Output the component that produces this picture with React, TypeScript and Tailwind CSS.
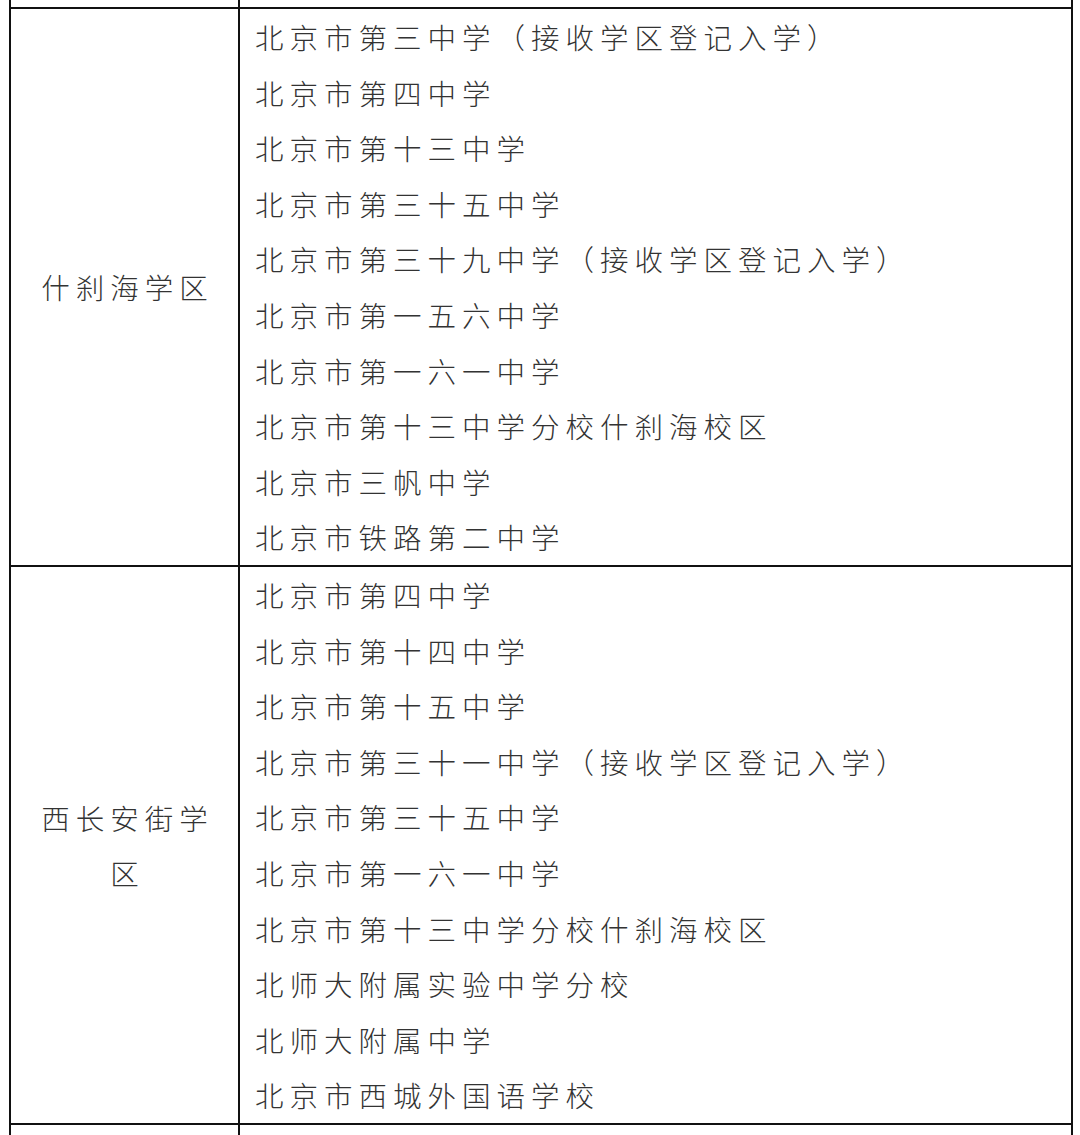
const rows = [
  {
    district: "什刹海学区",
    schools: [
      "北京市第三中学（接收学区登记入学）",
      "北京市第四中学",
      "北京市第十三中学",
      "北京市第三十五中学",
      "北京市第三十九中学（接收学区登记入学）",
      "北京市第一五六中学",
      "北京市第一六一中学",
      "北京市第十三中学分校什刹海校区",
      "北京市三帆中学",
      "北京市铁路第二中学",
    ],
  },
  {
    district: "西长安街学区",
    schools: [
      "北京市第四中学",
      "北京市第十四中学",
      "北京市第十五中学",
      "北京市第三十一中学（接收学区登记入学）",
      "北京市第三十五中学",
      "北京市第一六一中学",
      "北京市第十三中学分校什刹海校区",
      "北师大附属实验中学分校",
      "北师大附属中学",
      "北京市西城外国语学校",
    ],
  },
];

function EdgeRow({ h }: { h: string }) {
  return (
    <div className={`grid grid-cols-[231px_1fr] ${h}`}>
      <div className="border-l-2 border-r-2 border-[#111]" />
      <div className="border-r-2 border-[#111]" />
    </div>
  );
}

export default function App() {
  return (
    <div
      className="w-[1080px] h-[1135px] overflow-hidden bg-white text-[#333] font-light"
      style={{ fontFamily: '"Noto Sans CJK SC", "Noto Sans", sans-serif' }}
    >
      <div className="ml-[9px] w-[1064px]">
        <EdgeRow h="h-[7px]" />
        <div className="border-t-2 border-[#111]">
          {rows.map((row, i) => (
            <div
              key={i}
              className="grid grid-cols-[231px_1fr] border-b-2 border-[#111]"
            >
              <div className="flex items-center justify-center border-l-2 border-r-2 border-[#111] px-[14px] text-center text-[28.5px] leading-[55px] tracking-[6px]">
                <span className="pl-[6px]">{row.district}</span>
              </div>
              <div className="border-r-2 border-[#111] pl-[15px] text-[28.5px] leading-[55.6px] tracking-[6px]">
                {row.schools.map((s, j) => (
                  <div key={j} className="whitespace-nowrap">
                    {s}
                  </div>
                ))}
              </div>
            </div>
          ))}
        </div>
        <EdgeRow h="h-[12px]" />
      </div>
    </div>
  );
}
